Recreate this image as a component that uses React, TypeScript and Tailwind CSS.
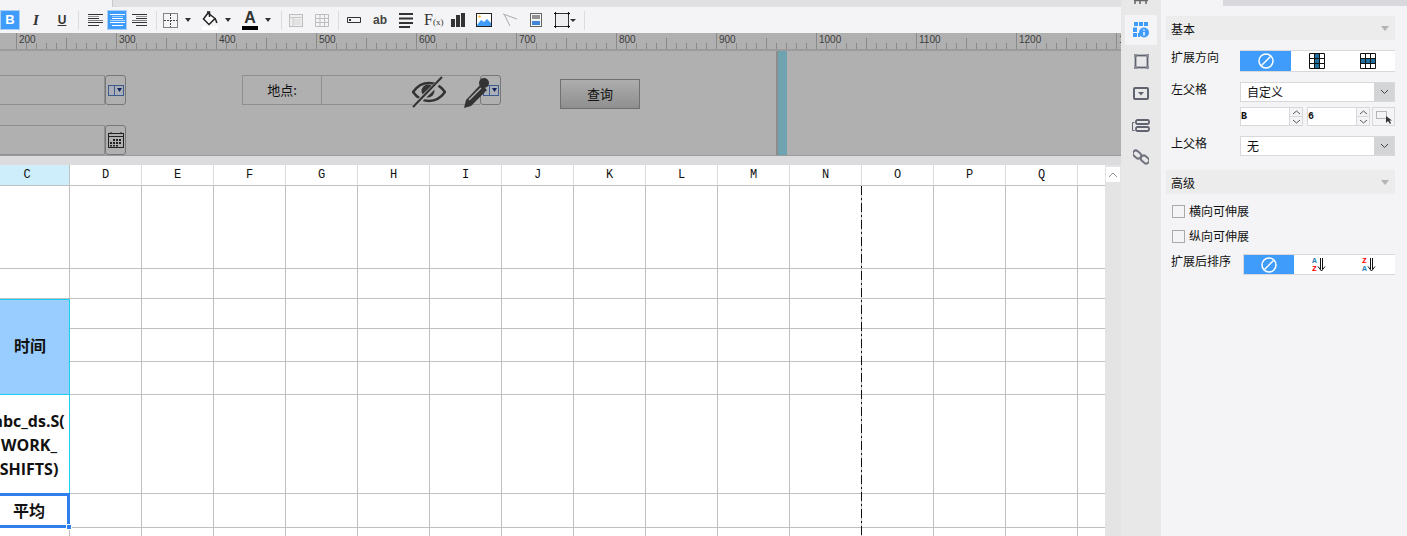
import React from 'react'

const cjk = "font-['Noto_Sans_CJK_SC',sans-serif]"

const Sep = ({ ml }: { ml: string }) => <div className={`${ml} w-px h-[19px] bg-[#dcdcde] shrink-0`} />

const Caret = ({ ml }: { ml: string }) => (
  <div className={`${ml} w-0 h-0 shrink-0 border-x-[3.5px] border-x-transparent border-t-[4px] border-t-[#333]`} />
)

const Lines = ({ ml, kind, color = '#333' }: { ml: string; kind: 'left' | 'center' | 'right'; color?: string }) => {
  const short = kind === 'left' ? [0, 11] : kind === 'center' ? [2, 13] : [4, 15]
  return (
    <svg className={`${ml} shrink-0`} width="15" height="14" viewBox="0 0 15 14">
      <g stroke={color} strokeWidth="1">
        <path d="M0 1.5H15M0 9.5H15" />
        <path d={`M${short[0]} 5.5H${short[1]}M${short[0]} 12.5H${short[1]}`} />
        <path d={`M${short[0]} 3.5H${short[1]}`} opacity=".5" />
        <path d="M0 7.5H15" opacity=".6" />
      </g>
    </svg>
  )
}

const Toolbar = () => (
  <div className="flex items-center h-[26px] bg-[#f4f4f6]">
    <div className="w-5 h-5 bg-[#3f9cfb] border border-[#a8cff5] flex items-center justify-center text-white text-[13px] font-bold font-['Liberation_Sans',sans-serif] shrink-0">B</div>
    <div className="ml-[7px] w-[18px] text-center text-[15px] leading-none font-bold italic text-[#333] font-['Liberation_Serif',serif] shrink-0">I</div>
    <div className="ml-2 w-[18px] text-center text-[12px] font-bold underline text-[#333] font-['Liberation_Sans',sans-serif] shrink-0">U</div>
    <Sep ml="ml-[7px]" />
    <Lines ml="ml-[9px]" kind="left" />
    <div className="ml-1 w-5 h-5 bg-[#3f9cfb] border border-[#a8cff5] flex items-center justify-center shrink-0">
      <Lines ml="" kind="center" color="#fff" />
    </div>
    <Lines ml="ml-[5px]" kind="right" />
    <Sep ml="ml-[9px]" />
    <svg className="ml-[6px] shrink-0" width="15" height="15" viewBox="0 0 15 15">
      <path d="M.5.5H14.500V14.500H.5Z" fill="none" stroke="#111" strokeDasharray="1 1" />
      <path d="M7.500 1V14M1 7.500H14" stroke="#444" strokeDasharray="2 1" />
    </svg>
    <Caret ml="ml-[7px]" />
    <svg className="ml-[11px] shrink-0" width="16" height="19" viewBox="0 0 16 19">
      <path d="M6 2 1.500 8 7 13.500l6-6z" fill="#fff" stroke="#222" strokeWidth="1.500" />
      <path d="M5 1h2.500v5M13 7.500c1 2 2 3 1.500 4.500" stroke="#222" fill="none" strokeWidth="1.500" />
      <rect y="15.500" width="16" height="3.500" fill="#fff" />
    </svg>
    <Caret ml="ml-[7px]" />
    <div className="ml-[11px] w-4 h-5 flex flex-col items-center shrink-0">
      <span className="h-4 leading-[15px] text-[16px] font-bold text-[#333] font-['Liberation_Sans',sans-serif]">A</span>
      <span className="w-4 h-1 bg-black" />
    </div>
    <Caret ml="ml-[7px]" />
    <Sep ml="ml-[10px]" />
    <svg className="ml-[7px] shrink-0" width="14" height="13" viewBox="0 0 14 13">
      <rect x=".5" y=".5" width="13" height="12" fill="#efeff1" stroke="#bdbdbd" />
      <path d="M.5 3.500H13.500M4 3.500V12.500" stroke="#c8c8c8" />
      <rect x="5" y="5" width="7" height="6" fill="#e2e2e2" />
    </svg>
    <svg className="ml-3 shrink-0" width="14" height="13" viewBox="0 0 14 13">
      <path d="M.5.5H13.500V12.500H.5ZM.5 4.500H13.500M.5 8.500H13.500M5 .5V12.500M9.500 .5V12.500" fill="none" stroke="#bdbdbd" />
    </svg>
    <Sep ml="ml-[9px]" />
    <svg className="ml-2 shrink-0" width="14" height="6" viewBox="0 0 14 6">
      <path d="M.5.5H13.500V5.500H.5Z" fill="#f4f4f6" stroke="#333" />
      <rect x="2" y="2" width="2" height="2" fill="#333" />
    </svg>
    <div className="ml-3 w-[13px] text-center text-[12px] font-bold text-[#444] leading-none font-['Liberation_Sans',sans-serif] shrink-0">ab</div>
    <svg className="ml-[13px] shrink-0" width="14" height="15" viewBox="0 0 14 15">
      <path d="M0 1H14M0 5.500H14M0 10H14M0 14H11" stroke="#333" strokeWidth="1.800" />
    </svg>
    <div className="ml-[11px] w-4 whitespace-nowrap text-[#333] leading-none font-['Liberation_Serif',serif] shrink-0">
      <span className="text-[16px]">F</span>
      <span className="text-[9px]">(x)</span>
    </div>
    <svg className="ml-[11px] shrink-0" width="14" height="14" viewBox="0 0 14 14">
      <path d="M0 6H4V14H0ZM5 2H9V14H5ZM10 0H14V14H10Z" fill="#333" />
    </svg>
    <svg className="ml-[11px] shrink-0" width="16" height="14" viewBox="0 0 16 14">
      <rect x=".5" y=".5" width="15" height="13" fill="#fff" stroke="#222" />
      <circle cx="3.500" cy="3.500" r="1.300" fill="#f5c242" />
      <path d="M1 12 5 7l3 2 3-3 4 4v3H1z" fill="#3f9cfb" />
    </svg>
    <svg className="ml-[11px] shrink-0" width="14" height="14" viewBox="0 0 14 14">
      <path d="M0 1 14 6M1 1l6 12" stroke="#aaa" fill="none" />
    </svg>
    <svg className="ml-[13px] shrink-0" width="12" height="14" viewBox="0 0 12 14">
      <rect x=".5" y=".5" width="11" height="13" fill="#f4f4f6" stroke="#666" />
      <path d="M2 3H10M2 5H10" stroke="#333" />
      <path d="M2 12V8H10V12Z" fill="#3f86d8" />
    </svg>
    <svg className="ml-3 shrink-0" width="16" height="16" viewBox="0 0 16 16">
      <rect x="1.500" y="1.500" width="13" height="13" fill="#efeff1" stroke="#333" />
      <path d="M0 1.500H3M1.500 0V3M13 1.500H16M14.500 0V3M0 14.500H3M1.500 13V16M13 14.500H16M14.500 13V16" stroke="#111" />
    </svg>
    <div className="w-0 h-0 border-x-[3px] border-x-transparent border-t-[3px] border-t-[#333] shrink-0" />
    <Sep ml="ml-2" />
  </div>
)

const rulerLabels = [200, 300, 400, 500, 600, 700, 800, 900, 1000, 1100, 1200, 1300]

const Ruler = () => (
  <div className="flex h-[18px] pl-[16px] bg-[#b0b0b0] border-b-2 border-[#9c9c9c] overflow-hidden">
    {rulerLabels.map((n) => (
      <div key={n} className="relative w-[100px] shrink-0 h-4">
        <svg className="absolute left-0 top-0" width="100" height="16" viewBox="0 0 100 16">
          <path
            d="M.5 0V16M10.500 10V16M20.500 10V16M30.500 10V16M40.500 10V16M50.500 5V16M60.500 10V16M70.500 10V16M80.500 10V16M90.500 10V16"
            stroke="#8a8a8a"
          />
        </svg>
        <span className="absolute left-[3px] top-0 text-[10px] leading-[13px] text-[#3c3c3c] font-['Liberation_Sans',sans-serif]">{n}</span>
      </div>
    ))}
  </div>
)

const PickButton = ({ children }: { children: React.ReactNode }) => (
  <div className="w-[21px] h-[30px] border border-[#777] rounded-[3px] flex items-center justify-center shrink-0">{children}</div>
)

const ComboIcon = () => (
  <svg width="16" height="11" viewBox="0 0 16 11">
    <rect x=".5" y=".5" width="15" height="10" fill="#a9aeb8" stroke="#3d5a8c" />
    <path d="M6.500 .5V10.500" stroke="#3d5a8c" />
    <path d="M9 3h5L11.500 7z" fill="#15205c" />
  </svg>
)

const Canvas = () => (
  <div className="relative h-[105px] bg-[#b0b0b0] border-b border-[#9a9a9a]">
    <div className="w-[787px] h-full flex">
      <div className="w-[776px] pt-6 border-r-0">
        <div className="flex items-start">
          <div className="w-[105px] h-[30px] border border-l-0 border-[#8f8f8f] shrink-0" />
          <PickButton><ComboIcon /></PickButton>
          <div className={`ml-[116px] w-20 h-[30px] border border-[#8f8f8f] text-[13px] leading-7 text-[#111] text-center shrink-0 ${cjk}`}>地点:</div>
          <div className="w-[158px] h-[30px] border-y border-[#8f8f8f] shrink-0" />
          <PickButton><ComboIcon /></PickButton>
          <div className={`ml-[59px] mt-1 w-20 h-[30px] border border-[#707070] bg-linear-to-b from-[#adadad] to-[#8f8f8f] text-[13px] leading-7 text-center text-[#111] shrink-0 ${cjk}`}>查询</div>
        </div>
        <div className="flex items-start mt-4">
          <div className="w-[105px] h-[30px] border border-l-0 border-[#8f8f8f] shrink-0" />
          <PickButton>
            <svg width="16" height="16" viewBox="0 0 16 16">
              <rect x=".5" y="1.500" width="15" height="14" fill="none" stroke="#222" />
              <path d="M.5 4.500H15.500M3 0V2M13 0V2" stroke="#222" />
              <path d="M5 7h2v2H5zM8 7h2v2H8zM11 7h2v2h-2zM2 10h2v2H2zM5 10h2v2H5zM8 10h2v2H8zM11 10h2v2h-2zM2 13h2v1.500H2zM5 13h2v1.500H5zM8 13h2v1.500H8z" fill="#222" />
            </svg>
          </PickButton>
        </div>
      </div>
      <div className="w-[2px] bg-[#8c8c8c]" />
      <div className="w-[9px] bg-[#70a3b0]" />
    </div>
    {/* 隐藏和编辑的标记，盖在控件上 */}
    <svg className="absolute left-[412px] top-[25px]" width="34" height="32" viewBox="0 0 34 32">
      <path d="M1 16C6 9 12 7 17 7s11 2 16 9c-5 7-11 9-16 9S6 23 1 16Z" fill="none" stroke="#333" strokeWidth="2.600" />
      <circle cx="16" cy="15" r="6.500" fill="#333" />
      <path d="M2 30 31 2" stroke="#b0b0b0" strokeWidth="5" />
      <path d="M1 31 30 1" stroke="#333" strokeWidth="2" />
    </svg>
    <svg className="absolute left-[463px] top-[26px]" width="30" height="32" viewBox="0 0 30 32">
      <path d="M1 31 3 23 18 7l6 6L8 29Z" fill="#333" />
      <path d="M6 23 18 11" stroke="#b0b0b0" strokeWidth="1.500" />
      <circle cx="21" cy="6" r="5" fill="#333" />
    </svg>
  </div>
)

const columns = ['D', 'E', 'F', 'G', 'H', 'I', 'J', 'K', 'L', 'M', 'N', 'O', 'P', 'Q', '']
const mono = "font-['Liberation_Mono',monospace]"

const EmptyRow = () => (
  <>
    {columns.map((c, i) => (
      <div key={i} className={`border-b border-[#c0c0c0] bg-white ${i < 14 ? 'border-r' : ''}`} />
    ))}
  </>
)

const Sheet = () => (
  <div className="relative flex flex-1 min-h-0 overflow-hidden">
    <div className="w-[1105px] overflow-hidden">
      <div className="-ml-[15px] grid grid-cols-[85px_repeat(14,72px)_27px] grid-rows-[21px_83px_30px_30px_33px_33px_99px_34px_30px]">
        <div className={`bg-[#cdeefa] border-b border-r border-[#c0c0c0] flex items-center justify-center text-[12px] text-[#111] ${mono}`}>C</div>
        {columns.map((c, i) => (
          <div key={i} className={`bg-white border-b border-b-[#c0c0c0] border-r-[#dcdcdc] flex items-center justify-center text-[12px] text-[#111] ${i < 14 ? 'border-r' : ''} ${mono}`}>{c}</div>
        ))}

        <div className="bg-white border-b border-r border-[#c0c0c0]" />
        <EmptyRow />
        <div className="bg-white border-b border-r border-[#c0c0c0]" />
        <EmptyRow />

        <div className={`row-span-3 bg-[#99ccff] border-y border-r border-[#19cff0] flex items-center justify-center pl-[6px] pb-1 text-[16px] font-bold text-[#111] ${cjk}`}>时间</div>
        <EmptyRow />
        <EmptyRow />
        <EmptyRow />

        <div className="bg-white border-r border-[#19cff0] flex items-center justify-center pl-1 text-center text-[16px] leading-[24px] font-bold text-[#111] whitespace-nowrap font-['Open_Sans',sans-serif]">
          <span>abc_ds.S(<br />WORK_<br />SHIFTS)</span>
        </div>
        <EmptyRow />

        <div className={`relative -mt-px bg-white border-y-[3px] border-r-[3px] border-[#2f80ed] flex items-center justify-center pl-[6px] pb-[2px] text-[16px] font-bold text-[#111] ${cjk}`}>
          平均
          <span className="absolute -right-[5px] -bottom-[5px] w-[6px] h-[6px] bg-[#2f80ed] border border-white" />
        </div>
        <EmptyRow />

        <div className="bg-white border-r border-[#c0c0c0]" />
        {columns.map((c, i) => (
          <div key={i} className={`bg-white border-[#c0c0c0] ${i < 14 ? 'border-r' : ''}`} />
        ))}
      </div>
    </div>
    <svg className="absolute left-[861px] top-[21px]" width="1" height="350">
      <line x1=".5" y1="0" x2=".5" y2="350" stroke="#111" strokeDasharray="9 3 2 3" />
    </svg>
    <div className="w-4 bg-[#e4e4e4]">
      <div className="mt-[2px] ml-px w-[14px] h-[15px] bg-white flex items-center justify-center">
        <svg width="10" height="6" viewBox="0 0 10 6"><path d="M1 5 5 1l4 4" fill="none" stroke="#999" /></svg>
      </div>
    </div>
  </div>
)

const RailSlot = ({ children }: { children: React.ReactNode }) => (
  <div className="w-8 h-8 flex items-center justify-center">{children}</div>
)

const Rail = () => (
  <div className="w-10 shrink-0 bg-[#e8e8e8] flex flex-col items-center">
    <svg className="h-[15px]" width="14" height="15" viewBox="0 0 14 15">
      <path d="M1 0V4M6 0V4M12 0V4M0 .5H14" stroke="#666" strokeWidth="1.500" />
    </svg>
    <div className="w-8 h-[30px] bg-[#f4f4f6] flex items-center justify-center">
      <svg width="16" height="16" viewBox="0 0 16 16">
        <path d="M1 0H5V4H1ZM6 0H10V4H6ZM11 0H15V4H11ZM0 5.500H4V10H0ZM0 11H4V15H0ZM5 11H7V15H5Z" fill="#3f9cfb" />
        <circle cx="11" cy="10.500" r="5" fill="#3f9cfb" />
        <path d="M11 7.500V8.800M11 10V13.500" stroke="#fff" strokeWidth="1.500" />
      </svg>
    </div>
    <RailSlot>
      <svg width="15" height="15" viewBox="0 0 15 15">
        <rect x="1.500" y="1.500" width="12" height="12" fill="none" stroke="#5f6470" strokeWidth="1.800" />
        <path d="M0 0H3V3H0ZM12 0H15V3H12ZM0 12H3V15H0ZM12 12H15V15H12Z" fill="#8a8d96" />
      </svg>
    </RailSlot>
    <RailSlot>
      <svg width="16" height="13" viewBox="0 0 16 13">
        <rect x="1" y="1" width="14" height="11" rx="1" fill="none" stroke="#5f6470" strokeWidth="2" />
        <path d="M5 5H11L8 8.500Z" fill="#5f6470" />
      </svg>
    </RailSlot>
    <RailSlot>
      <svg width="18" height="13" viewBox="0 0 18 13">
        <rect x="4" y="1" width="13" height="4" rx="1.500" fill="none" stroke="#5f6470" strokeWidth="1.800" />
        <rect x="4" y="8" width="13" height="4" rx="1.500" fill="none" stroke="#5f6470" strokeWidth="1.800" />
        <path d="M2.500 3.500H.5V11.500H2.500" fill="none" stroke="#5f6470" />
      </svg>
    </RailSlot>
    <RailSlot>
      <svg width="16" height="16" viewBox="0 0 16 16">
        <rect x="-.5" y="2.500" width="9" height="6" rx="3" transform="rotate(40 4 5.500)" fill="none" stroke="#6f737c" strokeWidth="2" />
        <rect x="7.500" y="7.500" width="9" height="6" rx="3" transform="rotate(40 12 10.500)" fill="none" stroke="#6f737c" strokeWidth="2" />
      </svg>
    </RailSlot>
  </div>
)

const SectionHead = ({ title, mt }: { title: string; mt: string }) => (
  <div className={`${mt} w-[229px] h-6 pt-px bg-[#ececec] flex items-center justify-between pl-[5px] pr-[6px]`}>
    <span className="text-[12px] text-[#111]">{title}</span>
    <div className="w-0 h-0 border-x-[4px] border-x-transparent border-t-[5px] border-t-[#b4b4b4]" />
  </div>
)

const Forbid = () => (
  <svg width="16" height="16" viewBox="0 0 16 16">
    <circle cx="8" cy="8" r="7" fill="none" stroke="#fff" strokeWidth="1.500" />
    <path d="M3.500 12.500 12.500 3.500" stroke="#fff" strokeWidth="1.500" />
  </svg>
)

const ExpandIcon = ({ fill }: { fill: string }) => (
  <svg width="16" height="16" viewBox="0 0 16 16">
    <path d={fill} fill="#1f6f9e" />
    <path d="M.5.5H15.500V15.500H.5ZM5.500.5V15.500M10.500.5V15.500M.5 5.500H15.500M.5 10.500H15.500" fill="none" stroke="#111" />
  </svg>
)

const Select = ({ value }: { value: string }) => (
  <div className="w-[155px] h-5 bg-white border border-[#d8d8da] flex items-center shrink-0">
    <span className="flex-1 pl-[6px] text-[12px] text-[#111]">{value}</span>
    <div className="w-5 h-full bg-[#d3d4d6] flex items-center justify-center">
      <svg width="9" height="6" viewBox="0 0 9 6"><path d="M1 1 4.500 4.500 8 1" fill="none" stroke="#444" /></svg>
    </div>
  </div>
)

const Spinner = ({ value, gapClass }: { value: string; gapClass: string }) => (
  <div className={`${gapClass} w-[63px] h-[19px] flex border border-[#d8d8da] bg-white shrink-0`}>
    <span className={`flex-1 text-[10px] leading-[17px] font-bold text-[#111] ${mono}`}>{value}</span>
    <div className="w-[13px] flex flex-col border-l border-[#d8d8da] bg-[#f4f4f6]">
      <div className="flex-1 flex items-center justify-center border-b border-[#d8d8da]">
        <svg width="9" height="5" viewBox="0 0 9 5"><path d="M1 4 4.500 1 8 4" fill="none" stroke="#555" /></svg>
      </div>
      <div className="flex-1 flex items-center justify-center">
        <svg width="9" height="5" viewBox="0 0 9 5"><path d="M1 1 4.500 4 8 1" fill="none" stroke="#555" /></svg>
      </div>
    </div>
  </div>
)

const FormLabel = ({ text }: { text: string }) => (
  <span className="w-[74px] pl-[5px] text-[12px] leading-[14px] text-[#111] whitespace-nowrap shrink-0">{text}</span>
)

const Check = ({ text, mt }: { text: string; mt: string }) => (
  <div className={`${mt} h-5 flex items-center pl-[6px]`}>
    <div className="w-[13px] h-[13px] border border-[#aaa] bg-[#f4f4f6]" />
    <span className="ml-1 text-[12px] text-[#111]">{text}</span>
  </div>
)

const SortIcon = ({ top, bottom, topColor, bottomColor }: { top: string; bottom: string; topColor: string; bottomColor: string }) => (
  <div className="flex items-center">
    <div className={`flex flex-col text-[8px] leading-[8px] font-bold ${mono}`}>
      <span className={topColor}>{top}</span>
      <span className={bottomColor}>{bottom}</span>
    </div>
    <svg width="9" height="14" viewBox="0 0 9 14"><path d="M3.500 0V11M5.500 0V11M1 8.500 4.500 13 8 8.500" fill="none" stroke="#111" /></svg>
  </div>
)

const Panel = () => (
  <div className={`flex-1 bg-[#f4f4f6] pl-[5px] ${cjk}`}>
    <div className="-ml-[5px] h-[6px] flex">
      <div className="w-[62px] bg-[#f4f4f6]" />
      <div className="flex-1 bg-[#d9d9dd]" />
    </div>
    <SectionHead title="基本" mt="mt-[10px]" />
    <div className="mt-[10px] flex items-start">
      <FormLabel text="扩展方向" />
      <div className="w-[155px] h-[22px] flex border-y border-[#d8d8da] bg-white">
        <div className="w-[51px] bg-[#3f9cfb] flex items-center justify-center"><Forbid /></div>
        <div className="w-[51px] flex items-center justify-center"><ExpandIcon fill="M5.500.5H10.500V15.500H5.500Z" /></div>
        <div className="w-[51px] flex items-center justify-center"><ExpandIcon fill="M.5 5.500H15.500V10.500H.5Z" /></div>
      </div>
    </div>
    <div className="mt-[10px] flex items-start">
      <FormLabel text="左父格" />
      <Select value="自定义" />
    </div>
    <div className="mt-[5px] ml-[74px] flex">
      <Spinner value="B" gapClass="" />
      <Spinner value="6" gapClass="ml-[4px]" />
      <div className="ml-[2px] w-[23px] h-[19px] border border-[#d8d8da] flex items-center justify-center shrink-0">
        <svg width="18" height="15" viewBox="0 0 18 15">
          <path d="M1.500 2.500H11.500V9.500H1.500Z" fill="none" stroke="#777" strokeDasharray="1 1" />
          <path d="M11 7V14L13 12 15 15 16 14 14.500 11.500H17Z" fill="#333" />
        </svg>
      </div>
    </div>
    <div className="mt-[10px] flex items-start">
      <FormLabel text="上父格" />
      <Select value="无" />
    </div>
    <SectionHead title="高级" mt="mt-[14px]" />
    <Check text="横向可伸展" mt="mt-[7px]" />
    <Check text="纵向可伸展" mt="mt-[5px]" />
    <div className="mt-[8px] flex items-start">
      <span className="w-[77px] pl-[5px] text-[12px] leading-[14px] text-[#111] whitespace-nowrap shrink-0">扩展后排序</span>
      <div className="w-[152px] h-[21px] flex border-y border-l border-[#d8d8da] bg-white">
        <div className="w-[50px] bg-[#3f9cfb] flex items-center justify-center"><Forbid /></div>
        <div className="w-[50px] flex items-center justify-center">
          <SortIcon top="A" bottom="Z" topColor="text-[#2b7fb8]" bottomColor="text-[#f00]" />
        </div>
        <div className="w-[50px] flex items-center justify-center">
          <SortIcon top="Z" bottom="A" topColor="text-[#f00]" bottomColor="text-[#2b7fb8]" />
        </div>
      </div>
    </div>
  </div>
)

export default function App() {
  return (
    <div className="w-[1407px] h-[536px] flex overflow-hidden bg-[#dcdcde]">
      <div className="w-[1121px] shrink-0 flex flex-col">
        <div className="h-[7px] flex">
          <div className="w-[113px] bg-[#f4f4f6] border-r border-[#c8c8ca]" />
          <div className="flex-1 bg-[#e0e0e2]" />
        </div>
        <Toolbar />
        <Ruler />
        <Canvas />
        <div className="h-[9px] bg-[#dcdcde]" />
        <Sheet />
      </div>
      <Rail />
      <Panel />
    </div>
  )
}
